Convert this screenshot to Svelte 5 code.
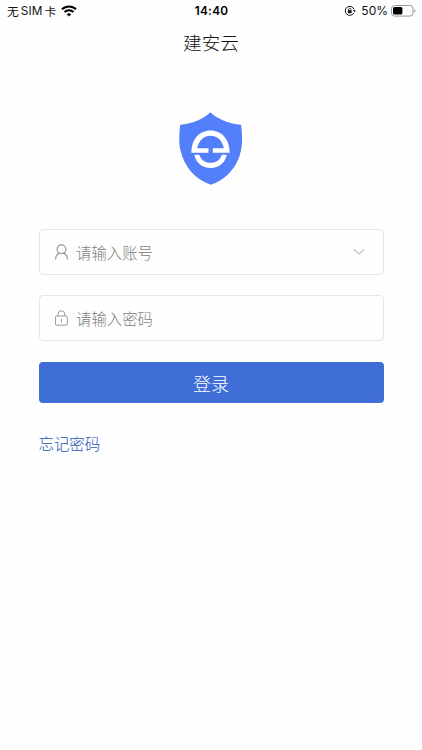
<script lang="ts">
    let account = '';
    let password = '';
</script>

<div class="screen">
    <header class="status">
        <div class="carrier">
            <span class="sim">无<span class="latin">SIM</span>卡</span>
            <svg width="16" height="12" viewBox="0 0 16 12" fill="none" stroke="#000" stroke-width="2.1">
                <path d="M1 4.3a10 10 0 0 1 14 0" />
                <path d="M3.5 7.1a6.4 6.4 0 0 1 9 0" />
                <path d="M8 11.6 5.7 9.3a3.3 3.3 0 0 1 4.6 0z" fill="#000" stroke="none" />
            </svg>
        </div>
        <time>14:40</time>
        <div class="power">
            <svg width="12" height="12" viewBox="0 0 12 12" fill="none" stroke="#111">
                <path d="M9.8 7.8A4.5 4.5 0 1 1 10 4.4" />
                <path d="M8.9 5.2h2.9l-1.4 2.1z" fill="#111" stroke="none" />
                <path d="M3.9 5.2h3.7v3H3.9z" fill="#111" stroke="none" />
                <path d="M4.6 5.5V4.4a1.15 1.15 0 0 1 2.3 0v1.1" stroke-width=".8" />
            </svg>
            <span class="percent">50%</span>
            <svg width="25" height="12" viewBox="0 0 25 12">
                <rect x=".5" y=".5" width="21.5" height="10.6" rx="3" fill="none" stroke="#999" />
                <rect x="2" y="2" width="9.4" height="7.6" rx="1.5" fill="#000" />
                <path d="M23.2 4v3.6q1.2-.5 1.2-1.8T23.2 4z" fill="#999" />
            </svg>
        </div>
    </header>

    <h1>建安云</h1>

    <svg class="logo" width="64" height="74" viewBox="0 0 64 74">
        <path d="M31.3.2C24.5 7 13 11.6 1.3 12.8.2 20-.4 31 1.5 38.5 5.5 55.5 17 67.8 31.9 72.8 46.8 67.8 58.5 55.5 62 38.5c1.6-7.5 1.2-18.5 0-25.7C49.8 11.6 38.2 7 31.3.2z" fill="#537ffb" />
        <path d="M12.4 40.8C12.4 27.5 20 18.4 31.5 18.4S50.7 27.5 50.7 40.8H33.8v-4.6h11.1C43.4 28.8 38.7 23.7 31.5 23.7S19.7 28.8 18.2 36.2h11.3v4.6z" fill="#fff" />
        <path d="M15.4 42.7h5c1.4 4.9 5.4 8.1 11.2 8.1s9.8-3.2 11.2-8.1h5C46.2 50.6 40 56 31.6 56S17 50.6 15.4 42.7z" fill="#fff" />
    </svg>

    <form on:submit|preventDefault>
        <label class="field">
            <svg width="15" height="16" viewBox="0 0 15 16" fill="none" stroke="#999" stroke-width="1.2" stroke-linecap="round">
                <circle cx="7.5" cy="5.2" r="4.4" />
                <path d="M1.5 15c.2-3.1 1.8-5.2 4-5.9M9.5 9.1c2.2.7 3.8 2.8 4 5.9" />
            </svg>
            <input bind:value={account} placeholder="请输入账号" />
            <svg class="arrow" width="12" height="8" viewBox="0 0 12 8" fill="none" stroke="#c4c4c4" stroke-width="1.3">
                <path d="M1 1.6 6 6l5-4.4" />
            </svg>
        </label>
        <label class="field">
            <svg width="15" height="16" viewBox="0 0 15 16" fill="none" stroke="#999">
                <rect x="1.5" y="6" width="11.8" height="9.2" rx="1.2" />
                <path d="M4 6V4.2a3.4 3.4 0 0 1 6.8 0V6M7.4 10v2.6" />
                <circle cx="7.4" cy="9.8" r=".8" fill="#999" stroke="none" />
            </svg>
            <input type="password" bind:value={password} placeholder="请输入密码" />
        </label>
        <button>登录</button>
    </form>

    <a href="#forgot">忘记密码</a>
</div>

<style>
    :global(body) {
        background: #fefefe;
    }

    .screen {
        font-family: 'Noto Sans CJK SC', sans-serif;
        font-weight: 300;
        color: #111;
    }

    .status {
        display: grid;
        grid-template-columns: 1fr auto 1fr;
        align-items: center;
        height: 22px;
        padding: 0 6px 0 7px;
        font-size: 12px;
        line-height: 22px;
    }

    .carrier,
    .power {
        display: flex;
        align-items: center;
    }

    .carrier {
        gap: 5px;
    }

    .sim {
        display: flex;
        gap: 2px;
        font-size: 11.8px;
        font-weight: 400;
    }

    .latin,
    .percent,
    time {
        font-family: Inter, sans-serif;
        font-weight: 400;
    }

    .latin {
        letter-spacing: 0.1px;
    }

    time {
        color: #000;
        font-size: 11.8px;
        font-weight: 600;
        letter-spacing: 0.3px;
    }

    .power {
        justify-content: flex-end;
    }

    .percent {
        margin: 0 3px 0 5px;
    }

    h1 {
        margin: 6px 0 0;
        font-size: 18.6px;
        font-weight: inherit;
        line-height: 28px;
        text-align: center;
    }

    .logo {
        display: block;
        margin: 55.5px 0 0 179px;
    }

    form {
        display: flex;
        flex-direction: column;
        gap: 20px;
        margin: 43.5px 38.5px 0;
    }

    .field {
        display: flex;
        align-items: center;
        box-sizing: border-box;
        height: 46px;
        padding: 0 18px 0 14px;
        border: 1px solid #e6e6e6;
        border-radius: 4px;
    }

    input {
        flex: 1;
        min-width: 0;
        margin: 0 0 1px 7.5px;
        padding: 0;
        border: none;
        outline: none;
        background: none;
        font: inherit;
        font-size: 15.4px;
    }

    input::placeholder {
        color: #808080;
    }

    button {
        height: 41px;
        margin-top: 1px;
        padding: 0;
        border: none;
        border-radius: 4px;
        background: #3f6fd6;
        color: #fff;
        font: inherit;
        font-size: 18px;
    }

    a {
        display: inline-block;
        margin: 28px 0 0 38.5px;
        color: #2355b5;
        font-size: 15.4px;
        line-height: 24px;
        text-decoration: none;
    }
</style>
